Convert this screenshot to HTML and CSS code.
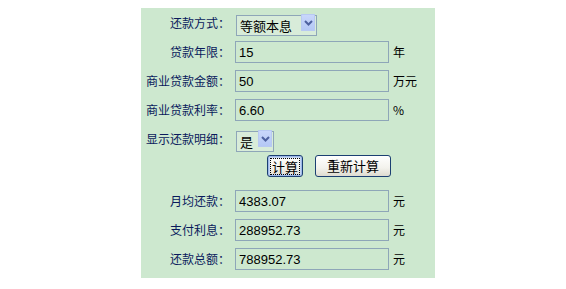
FILE: index.html
```html
<!DOCTYPE html>
<html lang="zh-CN">
<head>
    <meta charset="UTF-8">
    <title>房贷计算器</title>
    <link rel="stylesheet" href="styles.css">
</head>
<body>
    <div class="loan-calc">
        <div class="row">
            <label class="label">还款方式：</label>
            <div class="field">
                <span class="select-wrap select-wide">
                    <select class="select"><option>等额本息</option><option>等额本金</option></select>
                    <span class="select-arrow"><svg width="9" height="6" viewBox="0 0 9 6"><path d="M1 1 L4.5 4.5 L8 1" fill="none" stroke="#4d61a0" stroke-width="2"/></svg></span>
                </span>
            </div>
            <span class="unit"></span>
        </div>

        <div class="row">
            <label class="label">贷款年限：</label>
            <div class="field"><input class="text-input" type="text" value="15"></div>
            <span class="unit">年</span>
        </div>

        <div class="row">
            <label class="label">商业贷款金额：</label>
            <div class="field"><input class="text-input" type="text" value="50"></div>
            <span class="unit">万元</span>
        </div>

        <div class="row">
            <label class="label">商业贷款利率：</label>
            <div class="field"><input class="text-input" type="text" value="6.60"></div>
            <span class="unit">%</span>
        </div>

        <div class="row">
            <label class="label">显示还款明细：</label>
            <div class="field">
                <span class="select-wrap select-narrow">
                    <select class="select"><option>是</option><option>否</option></select>
                    <span class="select-arrow"><svg width="9" height="6" viewBox="0 0 9 6"><path d="M1 1 L4.5 4.5 L8 1" fill="none" stroke="#4d61a0" stroke-width="2"/></svg></span>
                </span>
            </div>
            <span class="unit"></span>
        </div>

        <div class="button-row">
            <button class="btn btn-default"><span class="btn-focus">计算</span></button>
            <button class="btn btn-reset">重新计算</button>
        </div>

        <div class="row">
            <label class="label">月均还款：</label>
            <div class="field"><input class="text-input" type="text" value="4383.07"></div>
            <span class="unit">元</span>
        </div>

        <div class="row">
            <label class="label">支付利息：</label>
            <div class="field"><input class="text-input" type="text" value="288952.73"></div>
            <span class="unit">元</span>
        </div>

        <div class="row">
            <label class="label">还款总额：</label>
            <div class="field"><input class="text-input" type="text" value="788952.73"></div>
            <span class="unit">元</span>
        </div>
    </div>
</body>
</html>
```

FILE: styles.css
```css
body {
    margin: 0;
    background: #ffffff;
    font-family: "Noto Sans CJK SC", "Liberation Sans", sans-serif;
}

.loan-calc {
    width: 294px;
    margin: 8px 0 0 141px;
    padding-bottom: 5px;
    background: #cde8cf;
}

.row {
    display: grid;
    grid-template-columns: 94px 154px 1fr;
    height: 29px;
    align-items: center;
}

.label {
    text-align: right;
    padding-right: 5px;
    font-size: 12px;
    color: #0a1a5c;
    white-space: nowrap;
}

.field {
    display: flex;
    align-items: center;
}

.text-input {
    box-sizing: border-box;
    width: 154px;
    height: 22px;
    margin: 0;
    padding: 1px 3px 0;
    border: 1px solid #8ea6b8;
    background: #cde8cf;
    font-family: "Liberation Sans", Arial, sans-serif;
    font-size: 13px;
    color: #000000;
    outline: none;
}

.unit {
    padding-left: 4px;
    font-size: 12px;
    color: #000000;
}

/* XP style combo box */
.select-wrap {
    position: relative;
    display: inline-block;
    height: 21px;
    margin-left: 1px;
}

.select-wide {
    width: 81px;
}

.select-narrow {
    width: 38px;
}

.select {
    -webkit-appearance: none;
    appearance: none;
    box-sizing: border-box;
    width: 100%;
    height: 21px;
    margin: 0;
    padding: 0 0 0 3px;
    border: 1px solid #8ea6b8;
    border-radius: 0;
    background: #d8ecd9;
    font-family: "Noto Sans CJK SC", sans-serif;
    font-size: 13px;
    line-height: 19px;
    color: #000000;
    outline: none;
}

.select-arrow {
    position: absolute;
    top: 2px;
    right: 2px;
    width: 14px;
    height: 17px;
    display: flex;
    align-items: center;
    justify-content: center;
    box-sizing: border-box;
    border: 1px solid #b8c9f2;
    background: linear-gradient(#c9d7fb, #b4c8f5);
    pointer-events: none;
}

.button-row {
    display: flex;
    align-items: flex-start;
    height: 31px;
    padding: 2px 0 0 126px;
    gap: 12px;
}

.btn {
    box-sizing: border-box;
    height: 22px;
    margin: 0;
    padding: 0 6px;
    border: 1px solid #1c3f72;
    border-radius: 3px;
    background: linear-gradient(#ffffff, #f3f2ec 60%, #dedbd0);
    font-family: "Noto Sans CJK SC", sans-serif;
    font-size: 13px;
    line-height: 18px;
    color: #000000;
}

.btn-default {
    width: 36px;
    padding: 0 2px;
    box-shadow: inset 0 0 0 1px #9db8e8, inset 0 0 0 2px #c6d6f2;
}

.btn-focus {
    display: block;
    border: 1px dotted #000000;
    line-height: 15px;
}

.btn-reset {
    width: 76px;
}
```
